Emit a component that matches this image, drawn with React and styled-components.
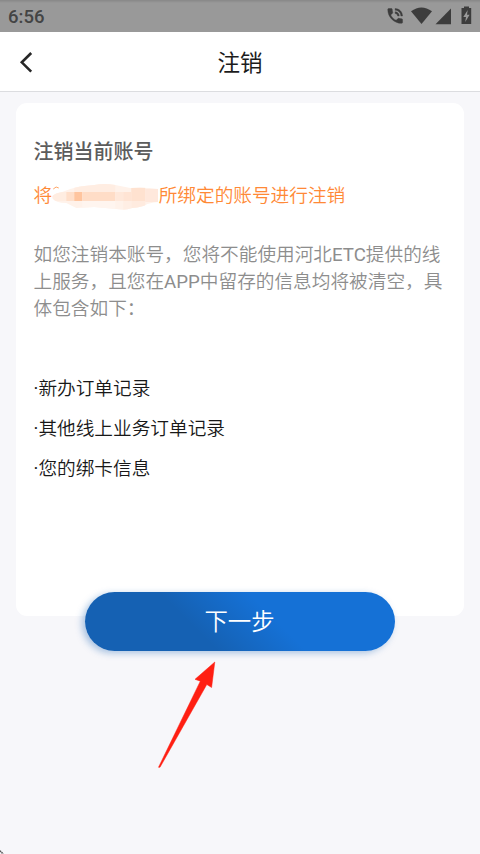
import React from "react";
import styled, { createGlobalStyle } from "styled-components";

const GlobalStyle = createGlobalStyle`
  * { box-sizing: border-box; }
  body {
    margin: 0;
    background: #f7f7fa;
    font-family: Roboto, "Noto Sans CJK SC", sans-serif;
  }
  h1, h2, p, ul { margin: 0; padding: 0; font-weight: 350; }
`;

const Screen = styled.div`
  position: relative;
  display: flex;
  flex-direction: column;
  width: 480px;
  height: 854px;
  overflow: hidden;
  background: #f7f7fa;
`;

const StatusBar = styled.header`
  display: flex;
  justify-content: space-between;
  height: 32px;
  padding: 0 7px 0 8px;
  background: linear-gradient(#878787 0, #999 3px, #999 100%);
  color: #3c3c3c;
`;

const Clock = styled.time`
  font-size: 18.5px;
  font-weight: 500;
  line-height: 34px;
  color: #444;
`;

const StatusIcons = styled.svg`
  display: block;
  width: 88px;
  height: 32px;
`;

const NavBar = styled.nav`
  display: grid;
  grid-template-columns: 60px 1fr 60px;
  align-items: start;
  height: 60px;
  border-bottom: 1px solid #dcdde0;
  background: #fff;
`;

const BackButton = styled.button`
  display: flex;
  width: 60px;
  height: 59px;
  padding: 20px 0 0 19px;
  border: 0;
  background: none;
`;

const Title = styled.h1`
  padding-top: 2px;
  text-align: center;
  font-size: 22.5px;
  font-weight: 400;
  line-height: 59px;
  color: #1c1c1c;
`;

const Card = styled.main`
  height: 513px;
  margin: 11px 16px 0;
  padding: 33px 18px 0 17.5px;
  border-radius: 11px;
  background: #fff;
`;

const Heading = styled.h2`
  font-size: 20px;
  font-weight: 500;
  line-height: 32px;
  color: #5c5c5c;
`;

const AccountLine = styled.p`
  display: flex;
  align-items: center;
  height: 30px;
  margin-top: 13px;
  font-size: 18.67px;
  line-height: 30px;
  color: #ff8936;
`;

const Mosaic = styled.svg`
  display: block;
  flex: none;
  width: 106.5px;
  height: 30px;
`;

const Notice = styled.p`
  margin-top: 31px;
  font-size: 18.67px;
  line-height: 27px;
  white-space: nowrap;
  color: #8d8d8d;
`;

const Latin = styled.span`
  font-weight: 400;
`;

const RecordList = styled.ul`
  margin-top: 46px;
  list-style: none;
`;

const Record = styled.li`
  font-size: 18.67px;
  line-height: 40px;
  color: #181818;
`;

const NextButton = styled.button`
  width: 310px;
  height: 59px;
  margin: -24px 0 0 85px;
  padding: 1px 1px 0 0;
  flex: none;
  border: 0;
  border-radius: 30px;
  background: linear-gradient(45deg, #1561b3 36%, #1571d6 60%);
  box-shadow: -3px 2px 7px rgba(21, 97, 179, 0.36);
  font-family: inherit;
  font-size: 23.4px;
  font-weight: 350;
  line-height: 59px;
  color: #fff;
`;

const Pointer = styled.svg`
  position: absolute;
  left: 150px;
  top: 655px;
  width: 80px;
  height: 120px;
  pointer-events: none;
`;

const CornerMark = styled.svg`
  position: absolute;
  left: 0;
  bottom: 0;
  width: 6px;
  height: 6px;
`;

const NOTICE_LINES = [
  ["如您注销本账号，您将不能使用河北", "ETC", "提供的线"],
  ["上服务，且您在", "APP", "中留存的信息均将被清空，具"],
  ["体包含如下：", "", ""],
];

const RECORDS = ["新办订单记录", "其他线上业务订单记录", "您的绑卡信息"];

const MOSAIC_TILES = [
  [0, 3, 106, 26, "#fff2ea"],
  [0, 11, 14, 9, "#ffede1"],
  [14, 11, 8, 9, "#ffdfca"],
  [22, 11, 8, 9, "#ffc59f"],
  [30, 11, 33, 9, "#ffddc7"],
  [22, 3, 41, 8, "#ffede2"],
  [30, 20, 33, 8, "#fff5ef"],
  [63, 11, 8, 9, "#ffe8da"],
  [71, 11, 8, 9, "#ffe4d4"],
  [71, 20, 8, 9, "#ffeee4"],
  [79, 6, 14, 14, "#ffe2d0"],
  [79, 20, 14, 8, "#ffebdf"],
  [93, 8, 13, 13, "#ffe8dc"],
];

export default function App() {
  return (
    <>
      <GlobalStyle />
      <Screen>
        <StatusBar>
          <Clock>6:56</Clock>
          <StatusIcons viewBox="0 0 88 32" fill="#3c3c3c">
            <g transform="translate(.3 6.1) scale(.82)" stroke="#3c3c3c" strokeWidth=".5">
              <path d="M20 15.5c-1.25 0-2.45-.2-3.57-.57-.35-.11-.74-.03-1.02.24l-2.2 2.2c-2.83-1.44-5.15-3.75-6.59-6.59l2.2-2.21c.28-.26.36-.65.25-1C8.7 6.45 8.5 5.25 8.5 4c0-.55-.45-1-1-1H4c-.55 0-1 .45-1 1 0 9.39 7.61 17 17 17 .55 0 1-.45 1-1v-3.5c0-.55-.45-1-1-1zM19 12h2c0-4.97-4.03-9-9-9v2c3.87 0 7 3.13 7 7zm-4 0h2c0-2.76-2.24-5-5-5v2c1.66 0 3 1.34 3 3z" />
            </g>
            <path d="M26 11.2Q36.400 3.600 47 11.2L36.500 24Z" />
            <path d="M50.500 24.200L66 8.500V24.200Z" />
            <path fillRule="evenodd" d="M77 8H79V6.500H84V8H86.200V24H76.500V8ZM82.700 10L78.300 17H81L80.200 22L84.600 14.700H82Z" />
          </StatusIcons>
        </StatusBar>
        <NavBar>
          <BackButton aria-label="返回">
            <svg width="16" height="22" viewBox="0 0 16 22" fill="none" stroke="#272727" strokeWidth="2.6">
              <path d="M12.200 1L2.800 10.300L12.200 19.600" />
            </svg>
          </BackButton>
          <Title>注销</Title>
        </NavBar>
        <Card>
          <Heading>注销当前账号</Heading>
          <AccountLine>
            将
            <Mosaic viewBox="0 0 106 30">
              <clipPath id="smear">
                <path d="M0 15Q3 12 10 11L18 8Q26 5 42 4Q52 2 63 4L78 7Q93 6 106 8V21Q102 21 95 23Q91 26 80 27Q72 30 64 28L42 26L24 27L14 22Q3 22 0 17Z" />
              </clipPath>
              <path d="M1 8Q4 4.500 6.500 7" fill="none" stroke="#ffa565" />
              <g clipPath="url(#smear)">
                {MOSAIC_TILES.map(([x, y, w, h, fill]) => (
                  <rect key={`${x}-${y}-${w}`} x={x} y={y} width={w} height={h} fill={fill} />
                ))}
              </g>
            </Mosaic>
            所绑定的账号进行注销
          </AccountLine>
          <Notice>
            {NOTICE_LINES.map(([before, latin, after]) => (
              <React.Fragment key={before}>
                {before}
                <Latin>{latin}</Latin>
                {after}
                <br />
              </React.Fragment>
            ))}
          </Notice>
          <RecordList>
            {RECORDS.map((name) => (
              <Record key={name}>
                <Latin>·</Latin>
                {name}
              </Record>
            ))}
          </RecordList>
        </Card>
        <NextButton>下一步</NextButton>
        <Pointer viewBox="0 0 80 120">
          <path d="M64.800 7L45 24.300L50.300 26.200L8.500 112.300L10 112.300L56.800 29.500L61.600 32.500Z" fill="#ff1f12" stroke="#ff1f12" strokeWidth=".5" />
        </Pointer>
        <CornerMark viewBox="0 0 6 6">
          <path d="M0 2.800L3.200 6" stroke="#555" strokeWidth="1.500" strokeDasharray="1.5 .6" />
        </CornerMark>
      </Screen>
    </>
  );
}
